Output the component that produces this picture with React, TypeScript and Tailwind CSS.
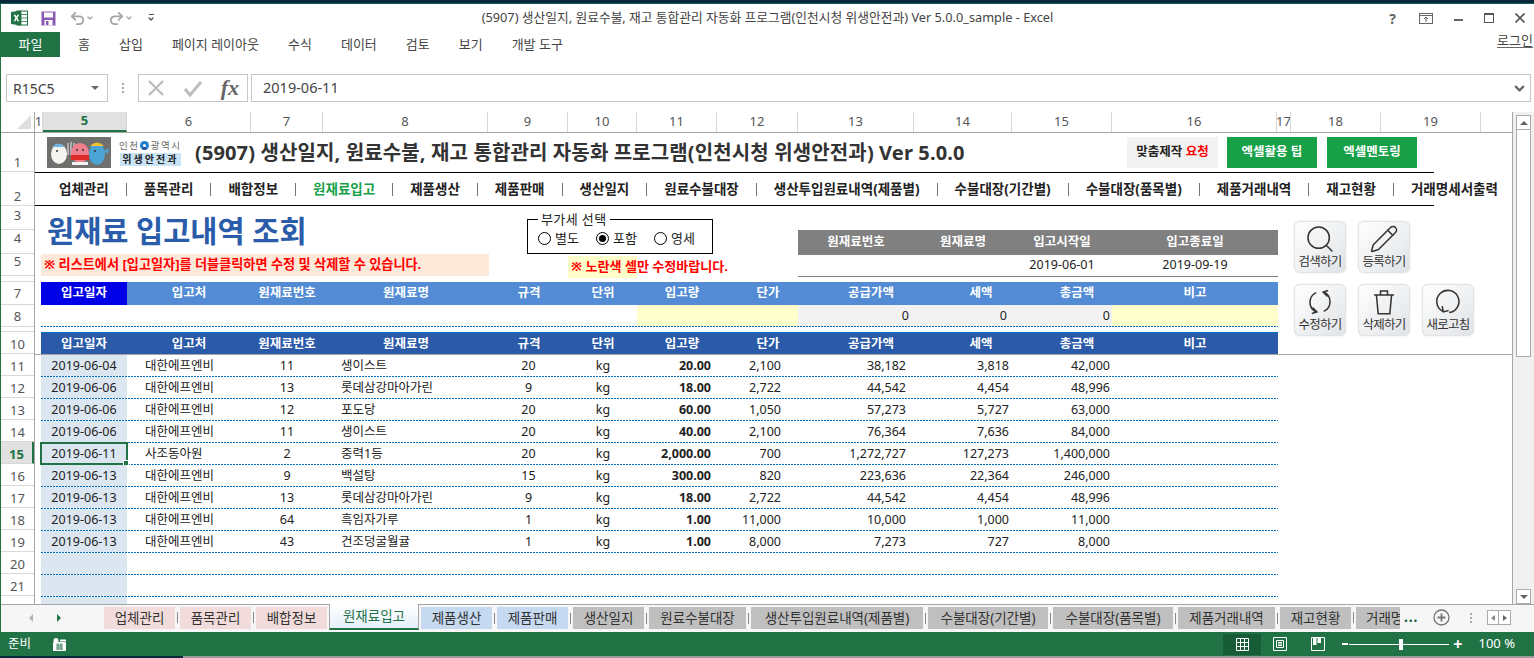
import { Search, Pencil, Undo2, Redo2, ChevronDown } from 'lucide-react'

const rowHeads = [
  { n: '1', cls: 'h-[39px] pt-[20px]' },
  { n: '2', cls: 'h-[34px] pt-[15px]' },
  { n: '3', cls: 'h-[24px] pb-[4px]' },
  { n: '4', cls: 'h-[24px] pb-[6px]' },
  { n: '5', cls: 'h-[22px] pb-[6px]' },
  { n: '', cls: 'h-[6px]' },
  { n: '7', cls: 'h-[23px]' },
  { n: '8', cls: 'h-[22px] pt-[2px]' },
  { n: '', cls: 'h-[5px]' },
  { n: '10', cls: 'h-[22px] pt-[4px]' },
]

const colHeads = [
  { n: '1', cls: 'w-[8px]' },
  { n: '5', cls: 'w-[84px] bg-[#e1e1e1] border-b-2 border-b-[#217346] text-[#217346] font-bold' },
  { n: '6', cls: 'w-[124px]' },
  { n: '7', cls: 'w-[72px]' },
  { n: '8', cls: 'w-[165px]' },
  { n: '9', cls: 'w-[80px]' },
  { n: '10', cls: 'w-[69px]' },
  { n: '11', cls: 'w-[80px]' },
  { n: '12', cls: 'w-[81px]' },
  { n: '13', cls: 'w-[116px]' },
  { n: '14', cls: 'w-[98px]' },
  { n: '15', cls: 'w-[100px]' },
  { n: '16', cls: 'w-[165px]' },
  { n: '17', cls: 'w-[14px]' },
  { n: '18', cls: 'w-[90px]' },
  { n: '19', cls: 'w-[100px]' },
]

const navItems = ['업체관리', '품목관리', '배합정보', '원재료입고', '제품생산', '제품판매', '생산일지', '원료수불대장', '생산투입원료내역(제품별)', '수불대장(기간별)', '수불대장(품목별)', '제품거래내역', '재고현황', '거래명세서출력']

const labels = ['입고일자', '입고처', '원재료번호', '원재료명', '규격', '단위', '입고량', '단가', '공급가액', '세액', '총금액', '비고']

const rows = [
  ['11', '2019-06-04', '대한에프엔비', '11', '생이스트', '20', 'kg', '20.00', '2,100', '38,182', '3,818', '42,000'],
  ['12', '2019-06-06', '대한에프엔비', '13', '롯데삼강마아가린', '9', 'kg', '18.00', '2,722', '44,542', '4,454', '48,996'],
  ['13', '2019-06-06', '대한에프엔비', '12', '포도당', '20', 'kg', '60.00', '1,050', '57,273', '5,727', '63,000'],
  ['14', '2019-06-06', '대한에프엔비', '11', '생이스트', '20', 'kg', '40.00', '2,100', '76,364', '7,636', '84,000'],
  ['15', '2019-06-11', '사조동아원', '2', '중력1등', '20', 'kg', '2,000.00', '700', '1,272,727', '127,273', '1,400,000'],
  ['16', '2019-06-13', '대한에프엔비', '9', '백설탕', '15', 'kg', '300.00', '820', '223,636', '22,364', '246,000'],
  ['17', '2019-06-13', '대한에프엔비', '13', '롯데삼강마아가린', '9', 'kg', '18.00', '2,722', '44,542', '4,454', '48,996'],
  ['18', '2019-06-13', '대한에프엔비', '64', '흑임자가루', '1', 'kg', '1.00', '11,000', '10,000', '1,000', '11,000'],
  ['19', '2019-06-13', '대한에프엔비', '43', '건조덩굴월귤', '1', 'kg', '1.00', '8,000', '7,273', '727', '8,000'],
  ['20'],
  ['21'],
]

const tabs = [
  { label: '제품생산', cls: 'w-[71px] bg-[#c5d9f1]' },
  { label: '제품판매', cls: 'w-[71px] bg-[#c5d9f1]' },
  { label: '생산일지', cls: 'w-[71px] bg-[#bfbfbf]' },
  { label: '원료수불대장', cls: 'w-[97px] bg-[#bfbfbf]' },
  { label: '생산투입원료내역(제품별)', cls: 'w-[172px] bg-[#bfbfbf]' },
  { label: '수불대장(기간별)', cls: 'w-[120px] bg-[#bfbfbf]' },
  { label: '수불대장(품목별)', cls: 'w-[120px] bg-[#bfbfbf]' },
  { label: '제품거래내역', cls: 'w-[97px] bg-[#bfbfbf]' },
  { label: '재고현황', cls: 'w-[71px] bg-[#bfbfbf]' },
]

function ExcelLogo() {
  return (
    <svg width="17" height="16" viewBox="0 0 17 16">
      <rect x="6" y="1" width="10.5" height="14" fill="#fff" stroke="#217346" />
      <path d="M10 1v14M6 4.5h10M6 8h10M6 11.5h10" stroke="#217346" strokeWidth="0.8" />
      <path d="M0 2l10-1.5v15L0 14z" fill="#217346" />
      <path d="M2.6 4.8h1.8l1 2 1-2h1.7L6.4 8l1.8 3.2H6.4l-1-2.1-1 2.1H2.6L4.4 8z" fill="#fff" />
    </svg>
  )
}

function SaveIcon() {
  return (
    <svg width="15" height="15" viewBox="0 0 15 15">
      <path d="M0.5 0.5h14v14h-14z" fill="#8a5bb4" />
      <rect x="3" y="1.5" width="9" height="5" fill="#fff" />
      <rect x="3.5" y="9" width="8" height="5.5" fill="#fff" />
      <rect x="5" y="10" width="2.5" height="4" fill="#8a5bb4" />
    </svg>
  )
}

function Logo() {
  return (
    <div className="flex items-center ml-[12px] w-[148px]">
      <svg width="64" height="31" viewBox="0 0 64 31" className="shrink-0">
        <rect width="64" height="31" fill="#6f706e" />
        <ellipse cx="12" cy="17" rx="8" ry="10" fill="#f4f4f2" />
        <path d="M5 10q6-7 13 0z" fill="#6fb6e6" />
        <path d="M21 6v12M24 5v13M27 6v12" stroke="#d8d8d8" strokeWidth="1.2" />
        <ellipse cx="33" cy="16" rx="9" ry="10" fill="#ef7f8c" />
        <path d="M24 18h18v5H24z" fill="#e02b2b" />
        <path d="M25 25h16v3H25z" fill="#f4f4f2" />
        <ellipse cx="50" cy="17" rx="8" ry="11" fill="#4aa5d6" />
        <path d="M43 9q7-7 14 0z" fill="#f2c230" />
        <path d="M57 14l5-3-1 6z" fill="#4aa5d6" />
        <circle cx="30" cy="13" r="1" fill="#333" />
        <circle cx="36" cy="13" r="1" fill="#333" />
        <circle cx="48" cy="14" r="1" fill="#333" />
        <circle cx="10" cy="14" r="1" fill="#333" />
      </svg>
      <div className="ml-[8px] flex flex-col items-center shrink-0">
        <div className="flex items-center text-[9.5px] leading-[13px] text-[#666] tracking-[1.6px] whitespace-nowrap">
          인천
          <span className="mr-[2px] size-[9px] rounded-full border-[3px] border-[#1d7fd0] border-b-[#1e4fa0]" />
          광역시
        </div>
        <div className="mt-[1px] w-[61px] h-[13px] bg-[#c9e4f7] text-[10px] leading-[13px] font-bold text-[#222] text-center tracking-[2px] whitespace-nowrap">
          위생안전과
        </div>
      </div>
    </div>
  )
}

function ActionButton({ label, children }: { label: string; children: React.ReactNode }) {
  return (
    <button className="w-[52px] h-[52px] flex flex-col items-center justify-between pt-[1px] pb-[3px] rounded-[6px] border border-[#e2e4e6] bg-gradient-to-br from-white to-[#e0e3e6] shadow-[0_0_1px_#bbb] text-[12.5px] leading-[15px] tracking-[-0.8px] text-[#333] whitespace-nowrap">
      <span className="h-[32px] flex items-center justify-center -mb-[2px]">{children}</span>
      {label}
    </button>
  )
}

export default function App() {
  return (
    <div className="w-[1534px] h-[658px] flex flex-col overflow-hidden bg-white text-[#222] font-['Noto_Sans','Noto_Sans_CJK_KR',sans-serif]">
      <div className="h-[3px] shrink-0 bg-[#05283b]" />
      <div className="h-px shrink-0 bg-[#0f5a5a]" />

      <div className="flex-1 flex flex-col min-h-0 border-l border-[#217346]">
        {/* Title bar */}
        <div className="h-[28px] shrink-0 grid grid-cols-[1fr_auto_1fr] items-center">
          <div className="flex items-center pl-[10px] text-[#a6a6a6]">
            <ExcelLogo />
            <span className="ml-[13px]"><SaveIcon /></span>
            <Undo2 className="size-[17px] ml-[13px]" strokeWidth={2.6} />
            <ChevronDown className="size-[8px]" strokeWidth={4} />
            <Redo2 className="size-[17px] ml-[14px]" strokeWidth={2.6} />
            <ChevronDown className="size-[8px]" strokeWidth={4} />
            <span className="ml-[14px] flex flex-col items-center text-[#555]">
              <span className="w-[5px] h-px bg-[#555]" />
              <ChevronDown className="size-[8px]" strokeWidth={4} />
            </span>
          </div>
          <div className="text-[12.75px] text-[#444] whitespace-nowrap">
            (5907) 생산일지, 원료수불, 재고 통합관리 자동화 프로그램(인천시청 위생안전과) Ver 5.0.0_sample - Excel
          </div>
          <div className="flex items-center justify-end text-[#666]">
            <span className="text-[14px] font-bold mr-[23px]">?</span>
            <svg width="14" height="11" viewBox="0 0 14 11" className="mr-[21px]" fill="none" stroke="#666">
              <rect x="0.5" y="0.5" width="13" height="10" />
              <path d="M0.5 2.5h13M7 9V4.5M5 6l2-2 2 2" />
            </svg>
            <span className="w-[9px] h-[2px] bg-[#666] mt-[4px] mr-[21px]" />
            <span className="w-[10px] h-[10px] border border-[#555] border-t-2 mr-[21px]" />
            <svg width="10" height="10" viewBox="0 0 10 10" className="mr-[9px]" stroke="#555" strokeWidth="1.6">
              <path d="M0.5 0.5l9 9M9.5 0.5l-9 9" />
            </svg>
          </div>
        </div>

        {/* Ribbon tabs */}
        <div className="h-[25px] shrink-0 flex items-center text-[13px] text-[#444]">
          <div className="w-[59px] h-full flex items-center justify-center bg-[#217346] text-white">파일</div>
          <div className="flex-1 flex items-center gap-[29px] pl-[18px] whitespace-nowrap">
            {['홈', '삽입', '페이지 레이아웃', '수식', '데이터', '검토', '보기', '개발 도구'].map((t) => (
              <span key={t}>{t}</span>
            ))}
          </div>
          <span className="mr-[1px] -mt-[8px] border-b border-[#666] leading-[14px]">로그인</span>
        </div>

        <div className="h-[17px] shrink-0" />

        {/* Formula bar */}
        <div className="h-[28px] shrink-0 flex items-stretch pl-[5px] pr-[3px] text-[14px] text-[#444]">
          <div className="w-[102px] flex items-center justify-between px-[6px] pr-[8px] border border-[#c6c6c6]">
            R15C5
            <span className="border-x-[4px] border-x-transparent border-t-[4px] border-t-[#666]" />
          </div>
          <div className="w-[30px] flex flex-col items-center justify-center gap-[2px]">
            <span className="size-[2px] bg-[#aaa]" />
            <span className="size-[2px] bg-[#aaa]" />
            <span className="size-[2px] bg-[#aaa]" />
          </div>
          <div className="w-[110px] flex items-center justify-between pl-[8px] pr-[8px] border border-[#c6c6c6]">
            <svg width="18" height="18" viewBox="0 0 18 18" stroke="#bdbdbd" strokeWidth="2.4" fill="none">
              <path d="M2 2l14 14M16 2L2 16" />
            </svg>
            <svg width="20" height="18" viewBox="0 0 20 18" stroke="#bdbdbd" strokeWidth="3" fill="none">
              <path d="M2 10l5 6L18 3" />
            </svg>
            <span className="font-['Liberation_Serif',serif] italic font-bold text-[22px] leading-none text-[#666]">fx</span>
          </div>
          <div className="ml-[3px] flex-1 flex items-center justify-between pl-[11px] pr-[3px] border border-[#c6c6c6] text-[14.5px]">
            2019-06-11
            <ChevronDown className="size-[15px] text-[#666]" strokeWidth={3.5} />
          </div>
        </div>

        <div className="h-[10px] shrink-0" />

        {/* Sheet + scrollbar */}
        <div className="flex-1 flex min-h-0">
          <div className="w-[1512px] flex flex-col min-h-0 border-r border-[#a6a6a6]">
            {/* Column headers */}
            <div className="h-[21px] shrink-0 flex border-b border-[#a6a6a6] text-[13px] text-[#555]">
              <div className="w-[34px] flex items-end justify-end pr-[3px] pb-[3px] border-r border-[#a6a6a6]">
                <svg width="14" height="14" viewBox="0 0 14 14"><path d="M14 0v14H0z" fill="#dfdfdf" /></svg>
              </div>
              {colHeads.map((c) => (
                <div key={c.n} className={`${c.cls} flex items-center justify-center border-r border-[#d8d8d8] overflow-hidden`}>{c.n}</div>
              ))}
            </div>

            <div className="flex-1 flex min-h-0 overflow-hidden">
              {/* Row headers */}
              <div className="w-[34px] shrink-0 flex flex-col border-r border-[#a6a6a6] text-[13px] text-[#555]">
                {rowHeads.map((r, i) => (
                  <div key={i} className={`${r.cls} shrink-0 flex items-center justify-center leading-none border-b border-[#d8d8d8]`}>{r.n}</div>
                ))}
                {rows.map((r) => (
                  <div
                    key={r[0]}
                    className={`h-[22px] shrink-0 flex items-center justify-center pt-[4px] leading-none border-b border-[#d8d8d8] ${r[0] === '15' ? 'bg-[#e1e1e1] border-r-2 border-r-[#217346] text-[#217346] font-bold' : ''}`}
                  >
                    {r[0]}
                  </div>
                ))}
              </div>

              {/* Cells */}
              <div className="flex-1 min-w-0 flex flex-col">
                {/* Row 1 */}
                <div className="h-[39px] shrink-0 flex items-center">
                  <Logo />
                  <div className="w-[932px] shrink-0 text-[20px] tracking-[0.13px] font-bold text-[#333] whitespace-nowrap">
                    (5907) 생산일지, 원료수불, 재고 통합관리 자동화 프로그램(인천시청 위생안전과) Ver 5.0.0
                  </div>
                  <div className="w-[91px] h-[31px] flex items-center justify-center bg-[#f2f2f2] text-[12.5px] font-bold whitespace-nowrap">
                    맞춤제작&nbsp;<span className="text-[#ff0000]">요청</span>
                  </div>
                  <div className="ml-[9px] w-[90px] h-[31px] flex items-center justify-center bg-[#18a048] text-[12.5px] font-bold text-white whitespace-nowrap">엑셀활용 팁</div>
                  <div className="ml-[10px] w-[90px] h-[31px] flex items-center justify-center bg-[#18a048] text-[12.5px] font-bold text-white whitespace-nowrap">엑셀멘토링</div>
                </div>

                {/* Row 2: nav */}
                <div className="h-[34px] shrink-0 w-[1399px] flex items-center gap-[17px] pl-[24px] border-y border-black text-[13.5px] font-bold text-[#222] whitespace-nowrap">
                  {navItems.map((item, i) => (
                    <div key={item} className="flex items-center gap-[17px]">
                      <span className={item === '원재료입고' ? 'text-[#18a048]' : ''}>{item}</span>
                      {i < navItems.length - 1 && <span className="w-px h-[13px] bg-[#777]" />}
                    </div>
                  ))}
                </div>

                {/* Rows 3-10 + buttons */}
                <div className="h-[149px] shrink-0 flex border-b border-[#a6a6a6]">
                  <div className="w-[1243px] shrink-0 flex flex-col pl-[6px]">
                    <div className="h-[76px] shrink-0 flex">
                      <div className="w-[448px] shrink-0 flex flex-col">
                        <div className="h-[48px] flex items-center pl-[6px] pt-[3px] text-[29.5px] font-bold text-[#2a5caa] whitespace-nowrap">원재료 입고내역 조회</div>
                        <div className="h-[22px] flex items-center pl-[3px] bg-[#fde9d9] text-[13.15px] font-bold text-[#ff0000] whitespace-nowrap">
                          ※ 리스트에서 [입고일자]를 더블클릭하면 수정 및 삭제할 수 있습니다.
                        </div>
                      </div>
                      <div className="w-[309px] shrink-0 flex flex-col">
                        <fieldset className="ml-[38px] mt-[6px] w-[186px] h-[42px] border border-black pl-[10px] text-[13px] leading-[15px]">
                          <legend className="px-[3px] tracking-[0.4px] whitespace-nowrap">부가세 선택</legend>
                          <div className="flex items-center mt-[4px] whitespace-nowrap">
                            <span className="size-[13px] rounded-full border border-black" />
                            <span className="ml-[4px] w-[41px]">별도</span>
                            <span className="size-[13px] rounded-full border border-black flex items-center justify-center">
                              <span className="size-[7px] rounded-full bg-black" />
                            </span>
                            <span className="ml-[4px] w-[41px]">포함</span>
                            <span className="size-[13px] rounded-full border border-black" />
                            <span className="ml-[4px]">영세</span>
                          </div>
                        </fieldset>
                        <div className="ml-[79px] mt-[2px] w-[69px] h-[22px] flex items-center pl-[3px] bg-[#ffffcc] text-[13.05px] font-bold text-[#ff0000] whitespace-nowrap">
                          ※ 노란색 셀만 수정바랍니다.
                        </div>
                      </div>
                      <div className="w-[480px] shrink-0 pt-[24px]">
                        <div className="h-[25px] grid grid-cols-[116px_98px_100px_166px] items-center bg-[#808080] text-[12.5px] font-bold text-white text-center">
                          <span>원재료번호</span>
                          <span>원재료명</span>
                          <span>입고시작일</span>
                          <span>입고종료일</span>
                        </div>
                        <div className="h-[22px] grid grid-cols-[116px_98px_100px_166px] items-center border-b border-[#808080] text-[12.5px] text-center">
                          <span />
                          <span />
                          <span>2019-06-01</span>
                          <span>2019-09-19</span>
                        </div>
                      </div>
                    </div>

                    {/* Row 7 */}
                    <div className="h-[23px] shrink-0 grid grid-cols-[86px_124px_72px_166px_80px_68px_90px_82px_124px_96px_96px_153px] items-center bg-[#538cd5] text-[12.5px] font-bold text-white text-center">
                      {labels.map((l, i) => (
                        <span key={l} className={i === 0 ? 'h-full flex items-center justify-center bg-[#0000e6]' : i === 11 ? 'pr-[13px]' : ''}>{l}</span>
                      ))}
                    </div>
                    {/* Row 8 */}
                    <div className="h-[21px] shrink-0 grid grid-cols-[86px_124px_72px_165px_81px_68px_80px_81px_116px_98px_100px_166px] text-[12.5px] leading-[22px] text-right">
                      <span />
                      <span />
                      <span />
                      <span />
                      <span />
                      <span />
                      <span className="bg-[#ffffcc]" />
                      <span className="bg-[#ffffcc]" />
                      <span className="bg-[#f2f2f2] pr-[5px]">0</span>
                      <span className="bg-[#f2f2f2] pr-[5px]">0</span>
                      <span className="bg-[#f2f2f2] pr-[2px]">0</span>
                      <span className="bg-[#ffffcc]" />
                    </div>
                    <div className="h-px shrink-0 bg-[linear-gradient(90deg,#0070c0_2px,#ffffff_2px)] bg-[length:3px_1px]" />
                    <div className="h-[5px] shrink-0" />
                    {/* Row 10 */}
                    <div className="h-[22px] shrink-0 grid grid-cols-[86px_124px_72px_166px_80px_68px_90px_82px_124px_96px_96px_153px] items-center pt-px bg-[#2a5aa8] border-t border-[#0070c0] text-[12.5px] font-bold text-white text-center">
                      {labels.map((l, i) => (
                        <span key={l} className={i === 11 ? 'pr-[13px]' : ''}>{l}</span>
                      ))}
                    </div>
                  </div>

                  <div className="pl-[16px] pt-[15px] grid grid-cols-[52px_52px_52px] auto-rows-[52px] gap-x-[12px] gap-y-[11px] content-start">
                    <ActionButton label="검색하기"><Search className="size-[32px]" strokeWidth={1.15} /></ActionButton>
                    <ActionButton label="등록하기"><Pencil className="size-[30px]" strokeWidth={1.2} /></ActionButton>
                    <span />
                    <ActionButton label="수정하기">
                      <svg width="30" height="30" viewBox="0 0 24 24" fill="none" stroke="#333" strokeWidth="1.2">
                        <path d="M9 4.5A8.5 8.5 0 0 0 9 20M6 16.5L9.5 20l-4 1.2M15 4a8.5 8.5 0 0 1 0 15.5M18 7.5L14.5 4l4-1.2" />
                      </svg>
                    </ActionButton>
                    <ActionButton label="삭제하기">
                      <svg width="28" height="28" viewBox="0 0 24 24" fill="none" stroke="#333" strokeWidth="1.3">
                        <path d="M3.5 6h17M9 6V2.5h6V6M5.5 6l1.5 16h10l1.5-16" />
                      </svg>
                    </ActionButton>
                    <ActionButton label="새로고침">
                      <svg width="28" height="28" viewBox="0 0 24 24" fill="none" stroke="#333" strokeWidth="1.3">
                        <path d="M13 21A9.5 9.5 0 1 0 7.5 20M7 15.5l1 5 4.5-1.2" />
                      </svg>
                    </ActionButton>
                  </div>
                </div>

                {/* Data rows */}
                {rows.map((r) => (
                  <div key={r[0]} className="h-[22px] shrink-0 w-[1243px] pl-[6px] flex flex-col">
                    <div className="h-[21px] shrink-0 grid grid-cols-[86px_124px_72px_165px_81px_68px_80px_81px_116px_98px_100px_166px] text-[12.5px] leading-[21px] text-[#222] whitespace-nowrap">
                      <span className="relative h-[21px] flex items-center justify-center bg-[#dce6f1]">
                        {r[1]}
                        {r[0] === '15' && (
                          <span className="absolute -inset-x-px -top-px -bottom-px border-2 border-[#217346]">
                            <span className="absolute -right-[3px] -bottom-[3px] size-[6px] bg-[#217346] border border-white" />
                          </span>
                        )}
                      </span>
                      <span className="pl-[18px]">{r[2]}</span>
                      <span className="text-center">{r[3]}</span>
                      <span className="pl-[18px]">{r[4]}</span>
                      <span className="text-center">{r[5]}</span>
                      <span className="text-center">{r[6]}</span>
                      <span className="text-right pr-[6px] font-bold">{r[7]}</span>
                      <span className="text-right pr-[17px]">{r[8]}</span>
                      <span className="text-right pr-[8px]">{r[9]}</span>
                      <span className="text-right pr-[3px]">{r[10]}</span>
                      <span className="text-right pr-[2px]">{r[11]}</span>
                      <span />
                    </div>
                    <div className="h-px shrink-0 bg-[linear-gradient(90deg,#0070c0_2px,#ffffff_2px)] bg-[length:3px_1px]" />
                  </div>
                ))}
                <div className="h-[10px] shrink-0 ml-[6px] w-[86px] bg-[#dce6f1]" />
              </div>
            </div>
          </div>

          {/* Vertical scrollbar */}
          <div className="flex-1 flex flex-col items-center pt-[3px] bg-[#f0f0f0]">
            <div className="w-[15px] h-[15px] flex items-center justify-center bg-white border border-[#ababab]">
              <span className="border-x-[4px] border-x-transparent border-b-[4px] border-b-[#666]" />
            </div>
            <div className="w-[15px] h-[228px] bg-white border border-[#ababab] -mt-px" />
            <div className="flex-1" />
            <div className="w-[15px] h-[15px] flex items-center justify-center bg-white border border-[#ababab]">
              <span className="border-x-[4px] border-x-transparent border-t-[4px] border-t-[#666]" />
            </div>
          </div>
        </div>

        {/* Sheet tabs */}
        <div className="h-[28px] shrink-0 flex items-start border-t border-[#a6a6a6] bg-[#f6f6f6] text-[13.5px] text-[#333] whitespace-nowrap">
          <div className="w-[100px] h-[25px] shrink-0 flex items-center">
            <span className="ml-[28px] border-y-[4px] border-y-transparent border-r-[4px] border-r-[#b5b5b5]" />
            <span className="ml-[24px] border-y-[4px] border-y-transparent border-l-[4px] border-l-[#217346]" />
            <span className="ml-[40px] w-px h-[11px] bg-[#888]" />
          </div>
          <div className="pt-[2px] flex items-start">
            <div className="ml-[3px] w-[71px] h-[22px] flex items-center justify-center bg-[#f2dcdb]">업체관리</div>
            <span className="ml-[2px] mt-[5px] w-px h-[11px] bg-[#888]" />
            <div className="ml-[2px] w-[71px] h-[22px] flex items-center justify-center bg-[#f2dcdb]">품목관리</div>
            <span className="ml-[2px] mt-[5px] w-px h-[11px] bg-[#888]" />
            <div className="ml-[2px] w-[71px] h-[22px] flex items-center justify-center bg-[#f2dcdb]">배합정보</div>
            <div className="ml-[2px] -mt-[3px] -mb-px w-[90px] h-[26px] flex items-center justify-center bg-gradient-to-b from-white to-[#e6effa] border-x border-x-[#a6a6a6] border-b-2 border-b-[#217346] text-[#217346] relative">
              원재료입고
            </div>
            {tabs.map((t, i) => (
              <div key={t.label} className="flex items-center">
                {i > 0 && <span className="ml-[2px] w-px h-[11px] bg-[#888]" />}
                <div className={`${t.cls} ml-[2px] h-[22px] flex items-center justify-center`}>{t.label}</div>
              </div>
            ))}
            <span className="ml-[2px] mt-[5px] w-px h-[11px] bg-[#888]" />
            <div className="ml-[2px] w-[44px] h-[22px] flex items-center pl-[10px] overflow-hidden bg-[#bfbfbf]">
              거래명
            </div>
          </div>
          <div className="flex-1 flex items-center h-[25px]">
            <span className="ml-[4px] text-[#0f5e33] font-bold tracking-[1px] leading-none">...</span>
            <svg width="17" height="17" viewBox="0 0 17 17" className="ml-[15px]" fill="none" stroke="#777" strokeWidth="1.3">
              <circle cx="8.5" cy="8.5" r="7.5" />
              <path d="M8.5 4.5v8M4.5 8.5h8" strokeWidth="1.8" />
            </svg>
            <span className="ml-[20px] flex flex-col gap-[2px]">
              <span className="size-[2px] bg-[#aaa]" />
              <span className="size-[2px] bg-[#aaa]" />
              <span className="size-[2px] bg-[#aaa]" />
            </span>
            <div className="ml-[15px] flex h-[15px] border border-[#aaa] bg-white">
              <span className="w-[11px] flex items-center justify-center border-r border-[#aaa]">
                <span className="border-y-[3px] border-y-transparent border-r-[4px] border-r-[#888]" />
              </span>
              <span className="w-[11px] flex items-center justify-center">
                <span className="border-y-[3px] border-y-transparent border-l-[4px] border-l-[#666]" />
              </span>
            </div>
          </div>
        </div>
      </div>

      {/* Status bar */}
      <div className="h-[24px] shrink-0 flex items-center bg-[#217346] text-white text-[12.5px]">
        <span className="ml-[8px]">준비</span>
        <svg width="13" height="13" viewBox="0 0 13 13" className="ml-[22px]" fill="none" stroke="#fff">
          <path d="M0.5 4.5h12v8h-12z" fill="#fff" />
          <path d="M3 7h7M3 9h7M3 11h7M5 5v7M8 5v7" stroke="#217346" strokeWidth="0.8" />
          <circle cx="3" cy="2.5" r="2.5" fill="#fff" stroke="none" />
          <path d="M7 2.5h6" strokeWidth="2" />
        </svg>
        <div className="ml-auto flex items-center">
          <div className="w-[38px] h-[21px] flex items-center justify-center bg-[#185c37]">
            <svg width="13" height="13" viewBox="0 0 13 13" fill="none" stroke="#fff"><path d="M0.5 0.5h12v12h-12zM4.5 0.5v12M8.5 0.5v12M0.5 4.5h12M0.5 8.5h12" /></svg>
          </div>
          <svg width="14" height="14" viewBox="0 0 14 14" className="ml-[12px]" fill="none" stroke="#fff"><path d="M0.5 0.5h13v13h-13zM3.5 3.5h7v7h-7zM5 5.5h4M5 7h4M5 8.5h4" /></svg>
          <svg width="14" height="14" viewBox="0 0 14 14" className="ml-[24px]" fill="none" stroke="#fff"><path d="M0.5 0.5h13v13h-13z" /><path d="M2 1h3.5v7H2zM6.5 1H10v5H6.5z" fill="#fff" stroke="none" /></svg>
          <span className="ml-[17px] w-[6px] h-[2px] bg-white" />
          <div className="ml-[1px] w-[100px] h-px bg-white relative">
            <span className="absolute left-[50px] -top-[5px] w-[4px] h-[11px] bg-white" />
          </div>
          <span className="ml-[4px] text-[16px] leading-none font-bold">+</span>
          <span className="ml-[16px] mr-[19px] text-[13px]">100 %</span>
        </div>
      </div>
      <div className="h-[2px] shrink-0 flex">
        <span className="w-[183px] bg-[#05283b]" />
        <span className="flex-1 bg-[#9a9a9a]" />
      </div>
    </div>
  )
}
